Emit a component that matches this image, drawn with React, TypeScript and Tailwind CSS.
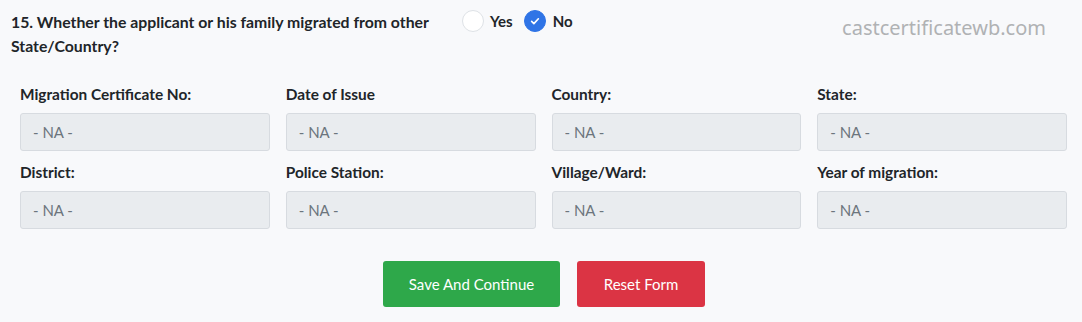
import React from 'react';

const fields = [
  'Migration Certificate No:',
  'Date of Issue',
  'Country:',
  'State:',
  'District:',
  'Police Station:',
  'Village/Ward:',
  'Year of migration:',
];

const App: React.FC = () => {
  const [migrated, setMigrated] = React.useState<'yes' | 'no'>('no');

  return (
    <div className="min-h-screen w-full bg-[#f8f9fb] text-[#212529]" style={{ fontFamily: 'Lato, "Noto Sans", sans-serif' }}>
      {/* Question row */}
      <div className="flex items-start pl-[11px] pr-[36px] pt-[10px]">
        <p className="w-[440px] text-[15.8px] font-bold leading-[24px]">
          15. Whether the applicant or his family migrated from other State/Country?
        </p>
        <div className="ml-[11px] mt-[1px] flex items-center h-[20px]">
          <button className="flex items-center gap-[6px]" onClick={() => setMigrated('yes')}>
            <span
              className={`w-[22px] h-[22px] rounded-full border flex items-center justify-center ${
                migrated === 'yes' ? 'bg-[#2f74e6] border-[#2f74e6]' : 'bg-white border-[#dee2e6]'
              }`}
            >
              {migrated === 'yes' && <Check />}
            </span>
            <span className="text-[15px] font-bold">Yes</span>
          </button>
          <button className="ml-[11px] flex items-center gap-[7px]" onClick={() => setMigrated('no')}>
            <span
              className={`w-[22px] h-[22px] rounded-full border flex items-center justify-center ${
                migrated === 'no' ? 'bg-[#2f74e6] border-[#2f74e6]' : 'bg-white border-[#dee2e6]'
              }`}
            >
              {migrated === 'no' && <Check />}
            </span>
            <span className="text-[15px] font-bold">No</span>
          </button>
        </div>
        <div className="ml-auto mt-[3px] text-[20px] text-[#b0b2b4]" style={{ fontFamily: '"Noto Sans", sans-serif' }}>
          castcertificatewb.com
        </div>
      </div>

      {/* Fields */}
      <div className="grid grid-cols-4 gap-x-[16px] gap-y-[11px] pl-[20px] pr-[15px] mt-[26px]">
        {fields.map((label) => (
          <div key={label} className="flex flex-col">
            <label className="text-[15.4px] font-bold leading-[20px] mb-[9px]">{label}</label>
            <input
              disabled
              placeholder="- NA -"
              className="h-[38px] w-full rounded-[3px] border border-[#d7dbe0] bg-[#e9ecef] px-[12px] text-[15px] placeholder:text-[#6c757d]"
            />
          </div>
        ))}
      </div>

      {/* Actions */}
      <div className="flex justify-center gap-[17px] mt-[32px] pl-[6px]">
        <button className="h-[46px] w-[177px] rounded-[3px] bg-[#2ea84a] text-white text-[15px]">
          Save And Continue
        </button>
        <button className="h-[46px] w-[128px] rounded-[3px] bg-[#db3444] text-white text-[15px]">
          Reset Form
        </button>
      </div>
    </div>
  );
};

const Check = () => (
  <svg width="12" height="12" viewBox="0 0 16 16" fill="none">
    <path d="M3.5 8.5l3 3 6-6.5" stroke="white" strokeWidth="2.2" strokeLinecap="round" strokeLinejoin="round" />
  </svg>
);

export default App;
